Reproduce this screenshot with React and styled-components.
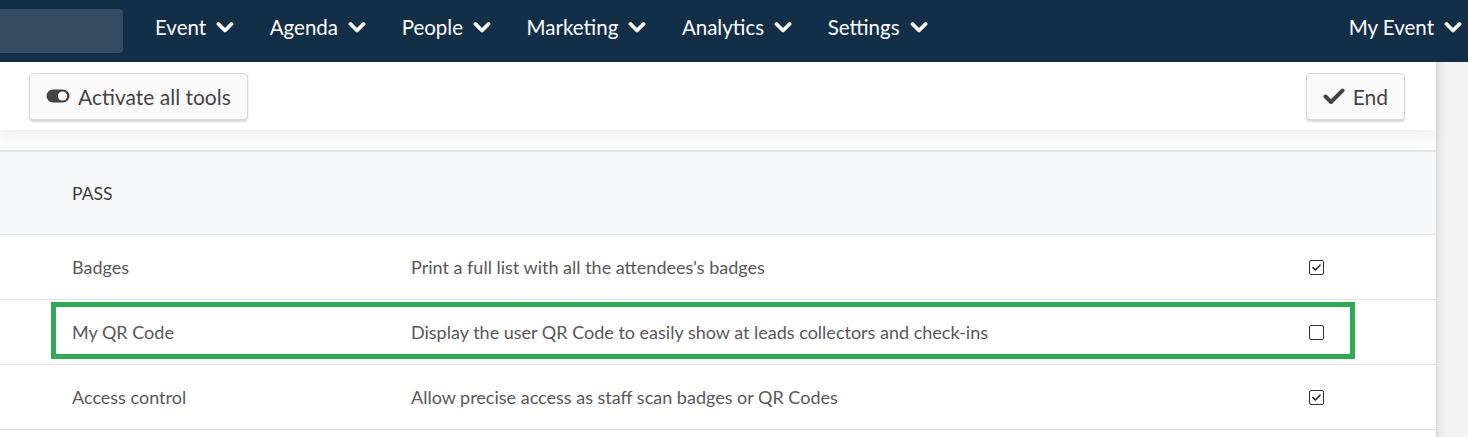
import React from "react";
import styled, { createGlobalStyle } from "styled-components";

const Global = createGlobalStyle`
  html, body { margin: 0; padding: 0; background: #fff; }
  body { font-family: Lato, "Open Sans", sans-serif; overflow: hidden; }
  * { box-sizing: border-box; }
`;

const Page = styled.div`
  width: 1468px;
  height: 437px;
  display: flex;
  flex-direction: column;
  overflow: hidden;
`;

const NavBar = styled.nav`
  height: 62px;
  background: #132e47;
  display: flex;
  align-items: center;
  padding-right: 6px;
  padding-bottom: 8px;
  flex-shrink: 0;
`;

const Search = styled.div`
  width: 123px;
  height: 44px;
  background: #344b60;
  border-radius: 0 4px 4px 0;
  margin-right: 32px;
  margin-top: 8px;
`;

const NavItem = styled.div`
  display: flex;
  align-items: center;
  gap: 10px;
  color: #fff;
  font-size: 20.5px;
  margin-right: ${(p) => (p.$push ? "0" : "35.6px")};
  margin-left: ${(p) => (p.$push ? "auto" : "0")};
`;

const Chevron = () => (
  <svg width="18" height="14" viewBox="0 0 18 14">
    <path d="M2.5 4 L9 10.5 L15.5 4" fill="none" stroke="#fff" strokeWidth="3.8" strokeLinecap="round" strokeLinejoin="round" />
  </svg>
);

const Body = styled.div`
  flex: 1;
  display: flex;
  min-height: 0;
`;

const Main = styled.div`
  flex: 1;
  display: flex;
  flex-direction: column;
  background: #fff;
`;

const Gutter = styled.div`
  width: 32px;
  background: linear-gradient(to right, #dcdcdc 0px, #ececec 4px, #f2f2f2 12px, #f4f4f4 100%);
`;

const Toolbar = styled.div`
  height: 68px;
  display: flex;
  align-items: center;
  justify-content: space-between;
  padding: 0 31px 0 29px;
  background: #fff;
  box-shadow: 0 6px 12px rgba(0, 0, 0, 0.06);
  position: relative;
  z-index: 1;
`;

const Button = styled.button`
  height: 47px;
  display: flex;
  align-items: center;
  gap: 8px;
  padding: 0 16px;
  background: #fafafa;
  border: 1px solid #d9d9d9;
  border-radius: 4px;
  box-shadow: 0 2px 2px rgba(0, 0, 0, 0.15);
  font-family: Lato, sans-serif;
  font-size: 21px;
  color: #454545;
  cursor: pointer;
`;

const Spacer = styled.div`
  height: 20px;
  background: #fdfdfd;
`;

const HeaderRow = styled.div`
  height: 85px;
  background: #f8f9fb;
  border-top: 2px solid #e4e5e7;
  border-bottom: 1px solid #e2e2e2;
  display: flex;
  align-items: center;
  padding-left: 72px;
  font-size: 17.5px;
  color: #3c3c3c;
`;

const Row = styled.div`
  position: relative;
  height: 65px;
  display: grid;
  grid-template-columns: 339px 1fr 15px;
  align-items: center;
  padding: 0 112px 0 72px;
  border-bottom: 1px solid #e2e2e2;
  font-size: 18px;
  color: #585858;
`;

const Highlight = styled.div`
  position: absolute;
  left: 51px;
  top: 2px;
  width: 1304px;
  height: 57px;
  border: 5px solid #2eaa52;
  pointer-events: none;
`;

const Box = styled.span`
  width: 15px;
  height: 15px;
  border: 1.5px solid #333;
  border-radius: 2px;
  display: flex;
  align-items: center;
  justify-content: center;
  background: #fff;
`;

const Checkbox = ({ checked }) => (
  <Box>
    {checked && (
      <svg width="11" height="11" viewBox="0 0 11 11">
        <path d="M2 5.6 L4.4 8 L9 3.2" fill="none" stroke="#222" strokeWidth="1.6" strokeLinecap="round" strokeLinejoin="round" />
      </svg>
    )}
  </Box>
);

const ToggleIcon = () => (
  <svg width="24" height="16" viewBox="0 0 24 16">
    <rect x="0.5" y="1.5" width="23" height="13" rx="6.5" fill="#454545" />
    <circle cx="16.5" cy="8" r="4.6" fill="#fff" />
  </svg>
);

const CheckIcon = () => (
  <svg width="22" height="18" viewBox="0 0 22 18">
    <path d="M2.5 9.5 L8 15 L19.5 3.5" fill="none" stroke="#454545" strokeWidth="4" strokeLinecap="round" strokeLinejoin="round" />
  </svg>
);

const navItems = ["Event", "Agenda", "People", "Marketing", "Analytics", "Settings"];

const rows = [
  { name: "Badges", desc: "Print a full list with all the attendees's badges", checked: true },
  { name: "My QR Code", desc: "Display the user QR Code to easily show at leads collectors and check-ins", checked: false, highlight: true },
  { name: "Access control", desc: "Allow precise access as staff scan badges or QR Codes", checked: true },
];

export default function App() {
  return (
    <Page>
      <Global />
      <NavBar>
        <Search />
        {navItems.map((n) => (
          <NavItem key={n}>
            {n}
            <Chevron />
          </NavItem>
        ))}
        <NavItem $push>
          My Event
          <Chevron />
        </NavItem>
      </NavBar>
      <Body>
        <Main>
          <Toolbar>
            <Button>
              <ToggleIcon />
              Activate all tools
            </Button>
            <Button>
              <CheckIcon />
              End
            </Button>
          </Toolbar>
          <Spacer />
          <HeaderRow>PASS</HeaderRow>
          {rows.map((r) => (
            <Row key={r.name}>
              <span>{r.name}</span>
              <span>{r.desc}</span>
              <Checkbox checked={r.checked} />
              {r.highlight && <Highlight />}
            </Row>
          ))}
        </Main>
        <Gutter />
      </Body>
    </Page>
  );
}
